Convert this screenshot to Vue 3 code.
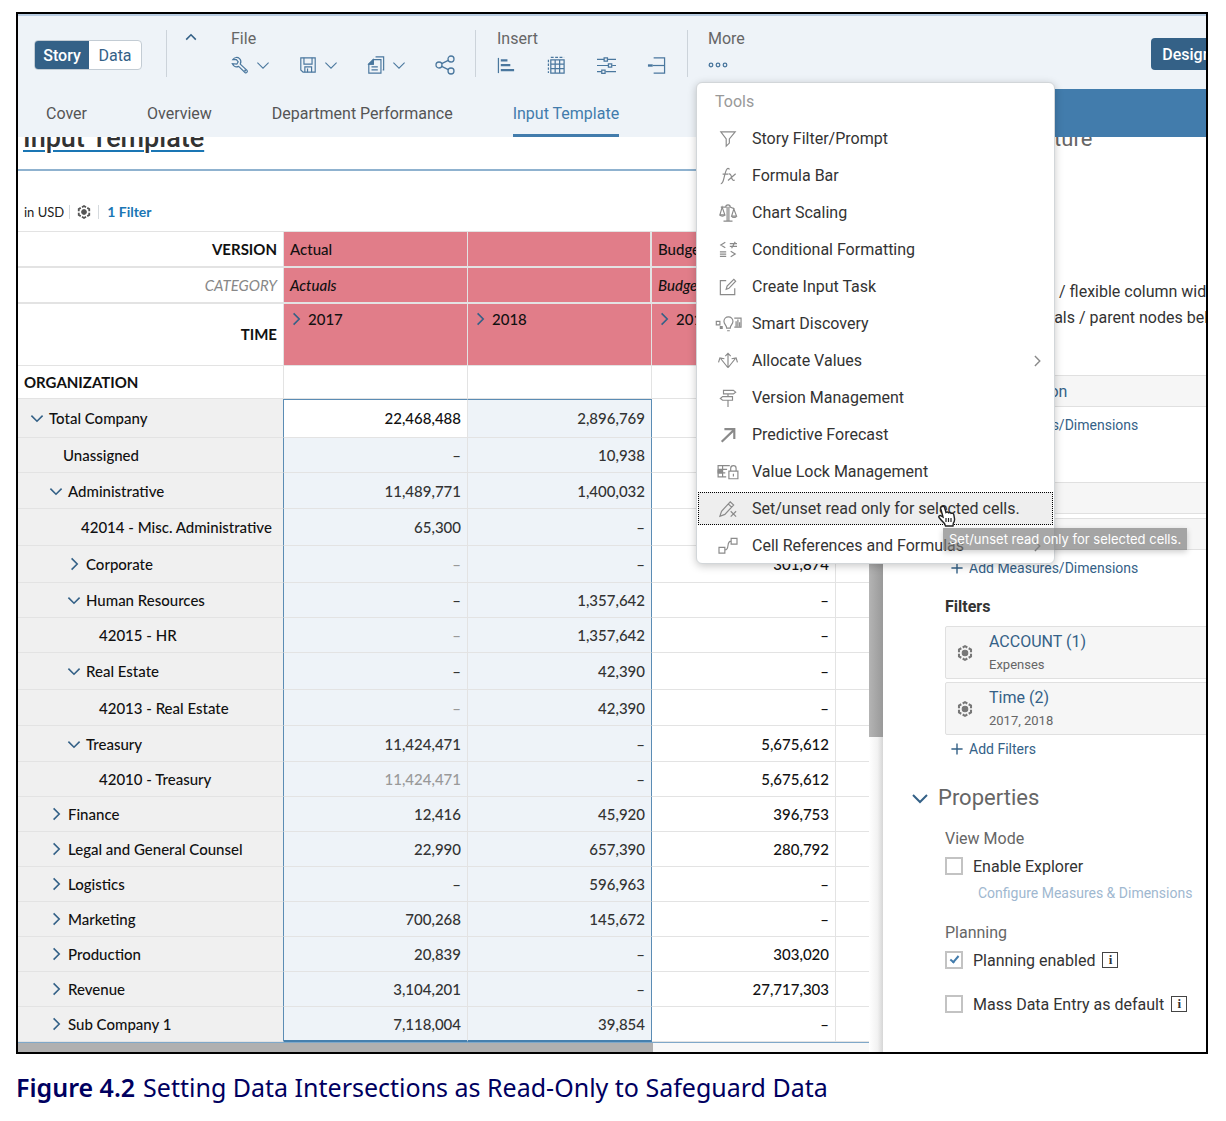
<script setup>
import { ref } from 'vue'

const icons = {
  up: '<path d="M4 12l6-6 6 6" stroke-width="2"/>',
  down: '<path d="M3 7l7 7 7-7"/>',
  right: '<path d="M7 3l7 7-7 7"/>',
  plus: '<path d="M10 2v16M2 10h16" stroke-width="2"/>',
  wrench: '<path d="M2 4C4 1 7.500 1 9.500 3c1.800 1.800 1.800 4 .8 6l7.500 7c1.200 1.500-.8 3.500-2.300 2.300L8.500 11.500C6 12.500 3 11.500 1.500 8.500l5 .5 1.500-2.500L6 4z"/><circle cx="15.800" cy="16.200" r=".5"/>',
  save: '<path d="M2 2h16v16H4.500L2 15.500z"/><path d="M5.500 2v7h9V2M6.500 18v-6h7.500v6M9.500 14v4"/>',
  copy: '<path d="M7 4h8.500v15H2V9z"/><path d="M2 9h5V4M9.500 1h9v14.500h-1M5 12h7M5 15.500h7"/><path d="M2 9l5-5v5z" fill="currentColor"/>',
  share: '<circle cx="4" cy="10" r="3"/><circle cx="16" cy="4" r="3"/><circle cx="16" cy="16" r="3"/><path d="M6.700 8.700l6.600-3.400M6.700 11.300l6.600 3.400"/>',
  bars: '<path d="M1.500 2v16"/><path d="M4 4.500h7M4 9.500h10M4 14.800h14" stroke-width="2.400"/>',
  grid: '<path d="M4 4h14v14H4zM4 8.600h14M4 13.300h14M8.600 4v14M13.300 4v14"/><path d="M4 1.500h14" stroke-dasharray="3 1.600"/><path d="M1.500 4v14" stroke-dasharray="2.500 1.500"/>',
  sliders: '<path d="M0 3.500h7.500M11.500 3.500H20M0 10h12M16 10h4M0 16.500h5M9 16.500h11"/><path d="M7.500 2h3.500v3.500H7.500zM12 8.300h3.500v3.500H12zM5 14.800h3.500v3.500H5z"/>',
  merge: '<path d="M7 2h11.500v16H7"/><path d="M1 10h5" stroke-width="2.500"/><path d="M6 10h12.500"/>',
  dots: '<circle cx="3" cy="10" r="1.800"/><circle cx="10" cy="10" r="1.800"/><circle cx="17" cy="10" r="1.800"/>',
  hex: '<circle cx="10" cy="10" r="3.500" fill="currentColor"/><path d="M10 1.500l7.500 4.200v8.600L10 18.500l-7.500-4.200V5.700z" stroke-width="2.600" stroke-dasharray="6.600 2" stroke-dashoffset="3.300"/>',
  filter: '<path d="M2 2h16l-6.500 8v4.500L8 18v-8z"/>',
  fx: '<path d="M2 18.500c4 1 4-17 8-17 1 0 1.500.5 1.500 1.200M4 8h6M10.500 8c2-1 3 1 3.500 3.500s1.500 4 3.500 3M18.500 7.500l-8.500 7.500"/>',
  scale: '<path d="M9 3v15.500M11 3v15.500M5 19h10M2 3.500h5.500a2.500 2.500 0 0 1 5 0l5 2M3.500 3.500L1 12h5.500zM16.500 5.500l-2.500 8h5.500z"/><path d="M1 12c1 2 4.500 2 5.500 0M14 13.500c1 2 4.500 2 5.500 0"/>',
  cond: '<path d="M7 1.500L2 4.500l5 3M12 3h8M12 6h8M18 1l-4 7M1 12h7M1 14.500h7M1 17h7M13 11.500l5 3-5 3"/>',
  task: '<path d="M8 3H1.500v15.500H17.500v-7M8 12.500l1-3.500 7.500-7.500 2 2L11 11.500z"/>',
  smart: '<path d="M-3 7h4v4h-4zM8.500 14.500c0-3-3-4-3-7.500a5 5 0 0 1 10 0c0 3.500-3 4.500-3 7.500zM9 17.500h3"/><path d="M1.500 13h2v2h-2z" fill="currentColor"/><path d="M17 3.500h7.500v10H17"/><path d="M19 7v6M21 5v8M23 8v5" stroke-width="1.400"/>',
  allocate: '<path d="M10 17.500V2M7 4.500L10 1.500l3 3M10 17.500L2 7.500M-.5 11.500L1 6.500l5 1M10 17.500l8-10M20.500 11.500L19 6.500l-5 1"/>',
  version: '<path d="M5 1.500h11l2.500 2-2.500 2H5zM4 8.500h11v4H4l-2.500-2zM10 5.500v3M10 12.500V20"/>',
  arrow: '<path d="M3 17.500L17 4M6 3.500h11v11" stroke-width="2.400"/>',
  lock: '<path d="M8 15.500H-1V3H12M-1 7h10M-1 11h8M4 3v12.500M11 9h10v8.500H11zM13 9V6a3 3 0 0 1 6 0v3M16 12v3"/><path d="M-1 8h4v3h-4z" fill="currentColor"/>',
  pencil: '<path d="M1 18l1.800-5.500L12.500 2l3.800 3.500L6.500 16zM10.500 4.500L14 8M13 12.500l6 6M19 12.500l-6 6"/>',
  cell: '<path d="M0 11.500h6.500V18H0zM13.500 1.500H20V8h-6.500zM6.500 14.500c6 0 1-10 7-10"/>',
}

const tools = [
  ['filter', 'Story Filter/Prompt'],
  ['fx', 'Formula Bar'],
  ['scale', 'Chart Scaling'],
  ['cond', 'Conditional Formatting'],
  ['task', 'Create Input Task'],
  ['smart', 'Smart Discovery'],
  ['allocate', 'Allocate Values', true],
  ['version', 'Version Management'],
  ['arrow', 'Predictive Forecast'],
  ['lock', 'Value Lock Management'],
  ['pencil', 'Set/unset read only for selected cells.'],
  ['cell', 'Cell References and Formulas', true],
]
const hovered = 10

const tabs = ['Cover', 'Overview', 'Department Performance', 'Input Template']
const insertTools = ['bars', 'grid', 'sliders', 'merge']
const years = ['2017', '2018', '2017']

// level, toggle, name, 2017, 2018, budget, row height, muted 2017 value
const rows = [
  [0, 'down', 'Total Company', '22,468,488', '2,896,769', '', 39],
  [1, '', 'Unassigned', '–', '10,938', '', 35],
  [1, 'down', 'Administrative', '11,489,771', '1,400,032', '', 36],
  [2, '', '42014 - Misc. Administrative', '65,300', '–', '', 37],
  [2, 'right', 'Corporate', '–', '–', '301,874', 37, true],
  [2, 'down', 'Human Resources', '–', '1,357,642', '–', 35],
  [3, '', '42015 - HR', '–', '1,357,642', '–', 35, true],
  [2, 'down', 'Real Estate', '–', '42,390', '–', 37],
  [3, '', '42013 - Real Estate', '–', '42,390', '–', 36, true],
  [2, 'down', 'Treasury', '11,424,471', '–', '5,675,612', 36],
  [3, '', '42010 - Treasury', '11,424,471', '–', '5,675,612', 35, true],
  [1, 'right', 'Finance', '12,416', '45,920', '396,753', 35],
  [1, 'right', 'Legal and General Counsel', '22,990', '657,390', '280,792', 35],
  [1, 'right', 'Logistics', '–', '596,963', '–', 35],
  [1, 'right', 'Marketing', '700,268', '145,672', '–', 35],
  [1, 'right', 'Production', '20,839', '–', '303,020', 35],
  [1, 'right', 'Revenue', '3,104,201', '–', '27,717,303', 35],
  [1, 'right', 'Sub Company 1', '7,118,004', '39,854', '–', 35],
]

const filters = [
  ['ACCOUNT (1)', 'Expenses'],
  ['Time (2)', '2017, 2018'],
]
const explorer = ref(false)
const planning = ref(true)
const massEntry = ref(false)
</script>

<template>
  <figure class="figure">
    <div class="frame">
      <header class="top">
        <div class="toolbar">
          <div class="segment">
            <button class="on">Story</button><button>Data</button>
          </div>
          <span class="rule"></span>
          <button class="icon-btn collapse" aria-label="Collapse toolbar">
            <svg class="ico chev" viewBox="0 0 20 20" v-html="icons.up"></svg>
          </button>
          <div class="group file">
            <span class="group-name">File</span>
            <div class="group-tools">
              <button v-for="n in ['wrench', 'save', 'copy']" :key="n" class="icon-btn pair" :aria-label="n">
                <svg class="ico" viewBox="0 0 20 20" v-html="icons[n]"></svg>
                <svg class="ico chev thin" viewBox="0 0 20 20" v-html="icons.down"></svg>
              </button>
              <button class="icon-btn" aria-label="share">
                <svg class="ico" viewBox="0 0 20 20" v-html="icons.share"></svg>
              </button>
            </div>
          </div>
          <span class="rule"></span>
          <div class="group insert">
            <span class="group-name">Insert</span>
            <div class="group-tools">
              <button v-for="n in insertTools" :key="n" class="icon-btn" :aria-label="n">
                <svg class="ico" viewBox="0 0 20 20" v-html="icons[n]"></svg>
              </button>
            </div>
          </div>
          <span class="rule"></span>
          <div class="group more">
            <span class="group-name">More</span>
            <div class="group-tools">
              <button class="icon-btn" aria-label="more">
                <svg class="ico" viewBox="0 0 20 20" v-html="icons.dots"></svg>
              </button>
            </div>
            <div class="menu" role="menu">
              <div class="menu-title">Tools</div>
              <button
                v-for="([icon, label, sub], i) in tools"
                :key="label"
                class="menu-item"
                :class="{ hover: i === hovered }"
                role="menuitem"
              >
                <svg class="ico" viewBox="0 0 20 20" v-html="icons[icon]"></svg>
                <span class="menu-label">{{ label }}</span>
                <svg v-if="sub" class="ico chev" viewBox="0 0 20 20" v-html="icons.right"></svg>
              </button>
              <div class="tooltip" role="tooltip">Set/unset read only for selected cells.</div>
              <svg class="cursor" viewBox="0 0 20 22">
                <path
                  d="M5 1.500c1.200-.5 2.200 0 2.600 1.200L9 7.500c1-.7 2-.6 2.600.3 1-.6 2-.4 2.500.6 1.200-.5 2.400 0 2.700 1.300l.7 4c.3 2-.3 3.300-1.200 4.500L16 21H8.500l-1-2.500C6 17 3.500 14.500 2 12.500c-.8-1.300.8-2.500 2.200-1.600L6 12 3.700 3.500C3.500 2.500 4 1.800 5 1.500z"
                  fill="#fff" stroke="#222" stroke-width="1.400"
                />
                <path d="M9 13v4M11.500 13v4M14 13v4" stroke="#222" stroke-width="1.200" />
              </svg>
            </div>
          </div>
          <button class="designer">Designer</button>
        </div>
        <div class="subbar">
          <nav class="tabs">
            <a v-for="t in tabs" :key="t" href="#" :class="{ active: t === 'Input Template' }">{{ t }}</a>
          </nav>
          <div class="panel-head"></div>
        </div>
      </header>

      <div class="body">
        <main class="story">
          <div class="sheet">
            <div class="title-wrap"><h1>Input Template</h1></div>
            <div class="info">
              <span>in USD</span>
              <svg class="ico hex" viewBox="0 0 20 20" v-html="icons.hex"></svg>
              <a href="#">1 Filter</a>
            </div>
            <table>
              <colgroup>
                <col class="c-name" /><col class="c-num" /><col class="c-num" /><col class="c-num" /><col />
              </colgroup>
              <thead>
                <tr class="short">
                  <th class="dim">VERSION</th>
                  <td class="red">Actual</td><td class="red wide-edge"></td><td class="red">Budget</td><td></td>
                </tr>
                <tr class="short ital">
                  <th class="dim grey">CATEGORY</th>
                  <td class="red">Actuals</td><td class="red wide-edge"></td><td class="red">Budget</td><td></td>
                </tr>
                <tr class="time">
                  <th class="dim">TIME</th>
                  <td v-for="(y, i) in years" :key="i" class="red">
                    <div class="year">
                      <svg class="ico chev" viewBox="0 0 20 20" v-html="icons.right"></svg>{{ y }}
                    </div>
                  </td>
                  <td></td>
                </tr>
                <tr class="org">
                  <th>ORGANIZATION</th><td></td><td></td><td></td><td></td>
                </tr>
              </thead>
              <tbody>
                <tr
                  v-for="[level, toggle, name, a, b, c, h, muted] in rows"
                  :key="name"
                  :style="{ height: h + 'px' }"
                >
                  <th scope="row">
                    <div class="node" :class="'lv' + level">
                      <svg v-if="toggle" class="ico chev" viewBox="0 0 20 20" v-html="icons[toggle]"></svg>
                      <span v-else class="blank"></span>
                      {{ name }}
                    </div>
                  </th>
                  <td class="sel first" :class="{ muted }">{{ a }}</td>
                  <td class="sel last">{{ b }}</td>
                  <td class="budget">{{ c }}</td>
                  <td></td>
                </tr>
              </tbody>
            </table>
            <div class="hscroll"><span></span></div>
          </div>
          <div class="vscroll"><span></span></div>
        </main>

        <aside class="panel">
          <h2 class="structure">Table Structure</h2>
          <p class="option">/ flexible column width</p>
          <p class="option totals">Totals / parent nodes below</p>
          <div class="slot named"><a href="#">Organization</a></div>
          <a href="#" class="add"><svg class="ico" viewBox="0 0 20 20" v-html="icons.plus"></svg>Add Measures/Dimensions</a>
          <div class="slot columns"></div>
          <div class="slot second"></div>
          <a href="#" class="add"><svg class="ico" viewBox="0 0 20 20" v-html="icons.plus"></svg>Add Measures/Dimensions</a>
          <h3>Filters</h3>
          <div v-for="[name, value] in filters" :key="name" class="card">
            <svg class="ico" viewBox="0 0 20 20" v-html="icons.hex"></svg>
            <div>
              <a href="#">{{ name }}</a>
              <small>{{ value }}</small>
            </div>
          </div>
          <a href="#" class="add"><svg class="ico" viewBox="0 0 20 20" v-html="icons.plus"></svg>Add Filters</a>
          <h2 class="props">
            <svg class="ico" viewBox="0 0 20 20" v-html="icons.down"></svg>Properties
          </h2>
          <h4>View Mode</h4>
          <label class="check"><input v-model="explorer" type="checkbox" />Enable Explorer</label>
          <a href="#" class="configure">Configure Measures &amp; Dimensions</a>
          <h4>Planning</h4>
          <label class="check"><input v-model="planning" type="checkbox" />Planning enabled<i class="info-box">i</i></label>
          <label class="check mass"><input v-model="massEntry" type="checkbox" />Mass Data Entry as default<i class="info-box">i</i></label>
        </aside>
      </div>
    </div>
    <figcaption><b>Figure 4.2</b>Setting Data Intersections as Read-Only to Safeguard Data</figcaption>
  </figure>
</template>

<style>
body {
  background: #fff;
}
</style>

<style scoped>
.figure {
  margin: 12px 18px 0 16px;
  font-family: Roboto, sans-serif;
  font-size: 16px;
  color: #333;
}
.frame {
  border: 2px solid #000;
  overflow: hidden;
  background: #fff;
}
button {
  font: inherit;
  border: 0;
  background: none;
  padding: 0;
  color: inherit;
}
a {
  color: #346187;
  text-decoration: none;
}
.ico {
  width: 20px;
  height: 20px;
  flex: none;
  fill: none;
  stroke: currentColor;
  stroke-width: 1.3;
  overflow: visible;
}
.chev {
  width: 16px;
  height: 16px;
  stroke-width: 2;
  color: #346187;
}

/* top bars */
.top {
  position: relative;
  z-index: 2;
}
.toolbar {
  display: flex;
  height: 75px;
  background: #eef3f8;
  border-top: 2px solid #b8cce2;
  box-sizing: border-box;
  padding: 14px 0 0 16px;
  box-shadow: 0 0 6px rgba(0, 0, 0, 0.1);
}
.segment {
  display: flex;
  box-sizing: border-box;
  height: 30px;
  margin-top: 10px;
  border: 1px solid #c3ccd4;
  border-radius: 4px;
  overflow: hidden;
  background: #fff;
}
.segment button {
  width: 52px;
  color: #346187;
}
.segment .on {
  width: 54px;
  background: #346187;
  color: #fff;
  font-weight: 500;
}
.rule {
  width: 1px;
  height: 47px;
  background: #ccd3da;
}
.segment + .rule {
  margin-left: 24px;
}
.icon-btn {
  display: flex;
  align-items: center;
  color: #4a779e;
}
.collapse {
  height: 16px;
  margin-left: 16px;
}
.group {
  position: relative;
}
.group-name {
  display: block;
  line-height: 18px;
  color: #666;
}
.group-tools {
  display: flex;
  height: 20px;
  margin-top: 7px;
}
.file {
  margin: 0 20px 0 32px;
}
.pair .ico:first-child {
  width: 18px;
  height: 18px;
}
.pair {
  gap: 6px;
  margin-right: 28px;
}
.thin {
  stroke-width: 1.3;
  color: #4a779e;
}
.insert {
  margin: 0 21px;
}
.insert .ico {
  width: 19px;
  height: 19px;
}
.insert .group-tools {
  gap: 31px;
}
.more {
  margin-left: 20px;
}
.designer {
  flex: none;
  width: 86px;
  height: 32px;
  margin: 8px -31px 0 auto;
  border-radius: 4px;
  background: #346187;
  color: #fff;
  font-weight: 500;
}
.subbar {
  display: flex;
  height: 48px;
}
.tabs {
  flex: 1;
  display: flex;
  align-items: flex-start;
  gap: 60px;
  padding-left: 28px;
  background: #eef3f8;
}
.tabs a {
  flex: none;
  box-sizing: border-box;
  line-height: 49px;
  height: 48px;
  border-bottom: 3px solid transparent;
  color: #555;
  white-space: nowrap;
}
.tabs .active {
  color: #427cac;
  border-color: #427cac;
}
.panel-head {
  width: 323px;
  background: #427cac;
}

/* tools menu */
.menu {
  position: absolute;
  left: -12px;
  top: 52px;
  width: 357px;
  height: 480px;
  border: 1px solid #d2d6d9;
  border-radius: 6px;
  background: #fff;
  box-shadow: 0 2px 8px rgba(0, 0, 0, 0.22);
}
.menu-title {
  padding: 9px 18px 0;
  line-height: 20px;
  margin-bottom: 10px;
  color: #999;
}
.menu-item {
  display: flex;
  align-items: center;
  box-sizing: border-box;
  width: 355px;
  height: 33px;
  margin: 0 1px 4px;
  padding: 0 8px 0 20px;
  text-align: left;
  border: 1px solid transparent;
  white-space: nowrap;
}
.menu-item .ico {
  width: 18px;
  height: 18px;
  color: #8a8a8a;
}
.menu-item .chev {
  width: 14px;
  height: 14px;
}
.menu-label {
  flex: 1;
  margin-left: 15px;
}
.hover {
  background: #eee;
  border: 1px dotted #000;
}
.tooltip {
  position: absolute;
  left: 246px;
  top: 445px;
  padding: 0 6px;
  font: 13px/22px Inter, sans-serif;
  color: #fff;
  white-space: nowrap;
  background: rgba(120, 120, 120, 0.65);
  box-shadow: 0 2px 6px rgba(0, 0, 0, 0.2);
}
.cursor {
  position: absolute;
  left: 240px;
  top: 422px;
  width: 20px;
  height: 22px;
  fill: none;
}

/* story sheet */
.body {
  display: flex;
}
.story {
  flex: 1;
  display: flex;
  min-width: 0;
}
.sheet {
  flex: 1;
  min-width: 0;
}
.title-wrap {
  height: 32px;
  border-bottom: 2px solid #8fb2cf;
}
h1 {
  margin: 0;
  padding-left: 5px;
  position: relative;
  top: -14px;
  font-size: 27px;
  font-weight: 500;
  line-height: 30px;
  text-decoration: underline 2px #1a76b4;
  text-underline-offset: 3px;
}
.info {
  display: flex;
  align-items: center;
  height: 60px;
  padding: 21px 0 0 6px;
  box-sizing: border-box;
  font-family: Lato, sans-serif;
  font-size: 13px;
  color: #222;
}
.info .hex {
  width: 14px;
  height: 14px;
  margin: 0 8px 0 5px;
  padding: 0 7px;
  border: solid #d5dade;
  border-width: 0 1px;
  color: #555;
}
.info a {
  font-weight: 700;
  font-size: 14px;
  color: #1a76b4;
}
table {
  width: 100%;
  table-layout: fixed;
  border-collapse: separate;
  border-spacing: 0;
  border-top: 1px solid #e3e3e3;
  border-bottom: 1px solid #7fa8c9;
  font-family: Lato, sans-serif;
  font-size: 15px;
  font-weight: 500;
  line-height: 18px;
  color: #111;
}
.c-name {
  width: 266px;
}
.c-num {
  width: 184px;
}
th,
td {
  box-sizing: border-box;
  padding: 0 6px;
  border-right: 1px solid #e3e3e3;
  border-bottom: 1px solid #e3e3e3;
  white-space: nowrap;
  text-align: left;
}
td:last-child {
  border-right: 0;
}
.short {
  height: 36px;
}
.short > * {
  border-bottom-width: 2px;
}
.time {
  height: 62px;
}
.time th {
  padding-bottom: 2px;
}
.org {
  height: 33px;
}
.dim {
  text-align: right;
}
.ital > * {
  font-style: italic;
}
.grey {
  font-weight: 400;
  color: #888;
}
.red {
  background: #e17d89;
}
.wide-edge {
  border-right-width: 2px;
}
.year {
  display: flex;
  align-items: center;
  gap: 4px;
  height: 58px;
  margin: 0 0 2px -2px;
  padding-bottom: 30px;
  box-sizing: border-box;
}
tbody th {
  background: #f0f0f0;
  font-weight: 500;
  border-right-color: #5b8cb4;
}
.node {
  display: flex;
  align-items: center;
  gap: 4px;
}
.blank {
  width: 11px;
}
.lv0 {
  padding-left: 5px;
}
.lv1 {
  padding-left: 24px;
}
.lv2 {
  padding-left: 42px;
}
.lv3 {
  padding-left: 60px;
}
tbody td {
  text-align: right;
}
.sel {
  background: #eef3f8;
  color: #333;
}
.sel.last {
  border-right-color: #5b8cb4;
}
tbody tr:first-child .sel {
  border-top: 1px solid #5b8cb4;
  padding-bottom: 2px;
}
tbody tr:first-child .first {
  background: #fff;
  color: #111;
}
tbody tr:last-child .sel {
  border-bottom: 2px solid #4680ae;
}
.sel.muted {
  color: #999;
}
.hscroll {
  height: 9px;
  background: #f8f8f8;
}
.hscroll span {
  display: block;
  width: 635px;
  height: 9px;
  background: #b0b0b0;
}
.vscroll {
  width: 14px;
  background: linear-gradient(90deg, #fff, #f2f2f2 60%, #d6d6d6);
}
.vscroll span {
  display: block;
  height: 600px;
  background: linear-gradient(90deg, #b4b4b4, #999);
}

/* side panel */
.panel {
  width: 323px;
  box-sizing: border-box;
  padding-left: 62px;
  overflow: hidden;
  white-space: nowrap;
}
h2 {
  margin: 0;
  font-size: 22px;
  font-weight: 400;
  line-height: 28px;
  color: #666;
}
.structure {
  margin: -12px 0 126px -1px;
}
.option {
  margin: 0 0 0 114px;
  font-size: 16px;
  line-height: 26px;
}
.totals {
  margin-left: 86px;
}
.slot {
  height: 30px;
  line-height: 32px;
  border: 1px solid #e0e0e0;
  background: #f6f6f6;
  margin-right: -2px;
}
.named {
  margin-top: 44px;
  padding-left: 31px;
}
.add {
  display: flex;
  align-items: center;
  gap: 5px;
  height: 36px;
  padding-left: 5px;
  font-size: 14px;
}
.add .ico {
  width: 14px;
  height: 14px;
}
.columns {
  margin-top: 39px;
}
.second {
  margin-top: 4px;
}
h3 {
  margin: 11px 0 9px;
  font-size: 16px;
  line-height: 20px;
}
.card {
  display: flex;
  align-items: center;
  gap: 16px;
  box-sizing: border-box;
  height: 53px;
  margin: 0 -2px 3px 0;
  padding-left: 11px;
  border: 1px solid #e0e0e0;
  border-radius: 2px;
  background: #f6f6f6;
}
.card .ico {
  width: 16px;
  height: 16px;
  color: #777;
}
.card a,
.card small {
  display: block;
  line-height: 23px;
}
.card small {
  font-size: 13px;
  color: #666;
}
.card + .add {
  height: 22px;
}
.props {
  display: flex;
  align-items: center;
  gap: 8px;
  margin: 24px 0 16px -35px;
}
.props .ico {
  color: #346187;
  stroke-width: 2;
}
h4 {
  margin: 0;
  font-size: 16px;
  font-weight: 400;
  line-height: 22px;
  color: #666;
}
.check {
  display: flex;
  align-items: center;
  height: 32px;
}
.check input {
  appearance: none;
  width: 18px;
  height: 18px;
  margin: 0 10px 0 0;
  border: 2px solid #c3c3c3;
  background: #fff;
  position: relative;
}
.check input:checked::after {
  content: '';
  position: absolute;
  left: 5px;
  top: 1px;
  width: 3px;
  height: 7px;
  border: solid #427cac;
  border-width: 0 2px 2px 0;
  transform: rotate(40deg);
}
.info-box {
  box-sizing: border-box;
  width: 16px;
  height: 16px;
  margin-left: 7px;
  border: 1px solid #444;
  font: 700 13px/14px 'Liberation Serif', serif;
  text-align: center;
}
.configure {
  display: block;
  margin-bottom: 18px;
  padding-left: 33px;
  font-size: 14px;
  line-height: 22px;
  color: #9fb8d0;
}
.mass {
  margin-top: 12px;
}
figcaption {
  margin-top: 15px;
  font-family: 'Noto Sans', sans-serif;
  font-size: 25px;
  line-height: 36px;
  color: #00005f;
}
figcaption b {
  margin-right: 8px;
  font-weight: 600;
}
</style>
